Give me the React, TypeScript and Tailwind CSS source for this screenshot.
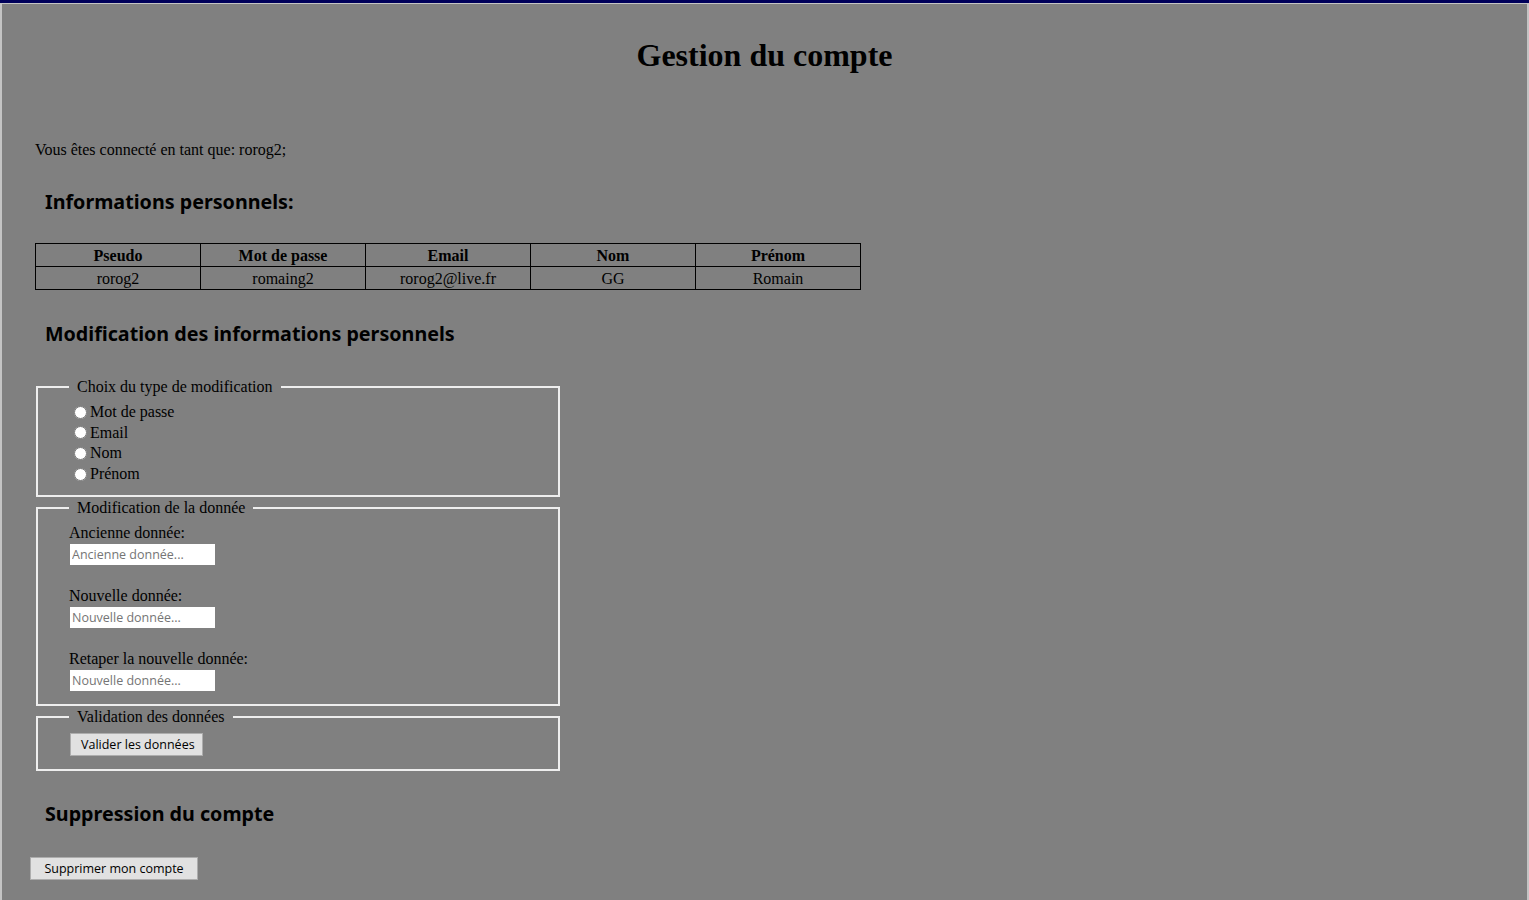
const serif = 'font-["Liberation_Serif","Times_New_Roman",serif]'

const columns = ['Pseudo', 'Mot de passe', 'Email', 'Nom', 'Prénom']
const values = ['rorog2', 'romaing2', 'rorog2@live.fr', 'GG', 'Romain']
const choices = ['Mot de passe', 'Email', 'Nom', 'Prénom']

const fields = [
	{ label: 'Ancienne donnée:', placeholder: 'Ancienne donnée...' },
	{ label: 'Nouvelle donnée:', placeholder: 'Nouvelle donnée...' },
	{ label: 'Retaper la nouvelle donnée:', placeholder: 'Nouvelle donnée...' },
]

function SectionTitle({ children }: { children: string }) {
	return (
		<h2 className='ml-[10px] h-[24px] font-["Noto_Sans",sans-serif] text-[19.7px] leading-[24px] font-bold text-black'>
			{children}
		</h2>
	)
}

function Box({ legend, className, children }: { legend: string; className?: string; children: React.ReactNode }) {
	return (
		<fieldset className={`ml-px w-[524px] border-2 border-[#eeeeee] pl-[31px] ${className ?? ''}`}>
			<legend className="px-2 text-[16px] leading-[18px]">{legend}</legend>
			{children}
		</fieldset>
	)
}

function GreyButton({ children, className }: { children: string; className?: string }) {
	return (
		<button
			type="button"
			className={`h-[23px] whitespace-nowrap border border-[#adadad] bg-[#e1e1e1] px-[10px] font-["Open_Sans","Noto_Sans",sans-serif] text-[12.5px] leading-[21px] text-black ${className ?? ''}`}
		>
			{children}
		</button>
	)
}

export default function App() {
	return (
		<div className={`min-h-screen border-t-[3px] border-[#00005a] bg-[#808080] ${serif} text-black`}>
			<div className="min-h-[897px] border-x-2 border-t border-[#c4c4c4] pl-[33px] pt-[33px]">
				<h1 className="-ml-[33px] text-center text-[32px] leading-[37px] font-bold">Gestion du compte</h1>

				<p className="mt-[67px] text-[16px] leading-[18px]">Vous êtes connecté en tant que: rorog2;</p>

				<div className="mt-[31px]">
					<SectionTitle>Informations personnels:</SectionTitle>
				</div>

				<table className="mt-[29px] w-[826px] border-collapse border border-black text-[16px] leading-[18px]">
					<thead>
						<tr className="h-[23px]">
							{columns.map((c) => (
								<th key={c} className="w-[165px] border border-black p-0 pt-[2px] text-center font-bold">
									{c}
								</th>
							))}
						</tr>
					</thead>
					<tbody>
						<tr className="h-[23px]">
							{values.map((v) => (
								<td key={v} className="border border-black p-0 pt-[2px] text-center">
									{v}
								</td>
							))}
						</tr>
					</tbody>
				</table>

				<div className="mt-[32px]">
					<SectionTitle>Modification des informations personnels</SectionTitle>
				</div>

				<Box legend="Choix du type de modification" className="mt-[32px] h-[119px] pt-[6px]">
					{choices.map((c) => (
						<label key={c} className="flex h-[20.6px] items-center text-[16px] leading-[18px]">
							<input type="radio" name="choix" className="mt-0 mr-[3px] ml-[5px] h-[13px] w-[13px]" />
							{c}
						</label>
					))}
				</Box>

				<Box legend="Modification de la donnée" className="mt-[2px] h-[207px] pt-[7px]">
					<div className="flex flex-col gap-[22px]">
						{fields.map((f) => (
							<div key={f.label} className="flex flex-col">
								<span className="h-[18px] text-[16px] leading-[18px]">{f.label}</span>
								<input
									placeholder={f.placeholder}
									className='mt-[2px] ml-px h-[21px] w-[145px] bg-white px-[2px] font-["Open_Sans","Noto_Sans",sans-serif] text-[12.5px] text-black placeholder:text-[#757575] outline-none'
								/>
							</div>
						))}
					</div>
				</Box>

				<Box legend="Validation des données" className="mt-[2px] h-[63px] pt-[6px]">
					<GreyButton className="ml-px w-[133px]">Valider les données</GreyButton>
				</Box>

				<div className="mt-[31px]">
					<SectionTitle>Suppression du compte</SectionTitle>
				</div>

				<GreyButton className="mt-[31px] -ml-[5px] w-[168px]">Supprimer mon compte</GreyButton>
			</div>
		</div>
	)
}
